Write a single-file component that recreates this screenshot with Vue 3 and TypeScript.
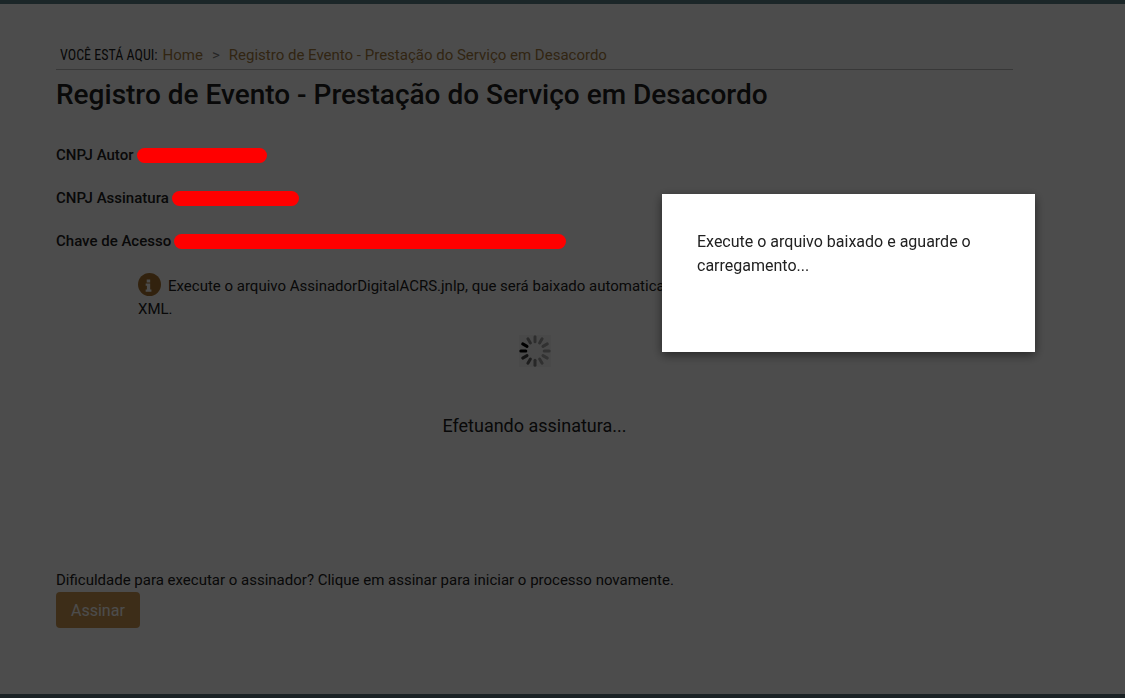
<script setup lang="ts">
interface Field {
  label: string
  mark: string
}

const title = 'Registro de Evento - Prestação do Serviço em Desacordo'

const fields: Field[] = [
  { label: 'CNPJ Autor', mark: 'autor' },
  { label: 'CNPJ Assinatura', mark: 'assinatura' },
  { label: 'Chave de Acesso', mark: 'chave' },
]

// Spokes run clockwise from the top; the darkest one leads the rotation.
const spokes: string[] = [
  '#9c9c9c', '#a0a0a0', '#a4a4a4', '#a8a8a8', '#aaaaaa', '#a0a0a0',
  '#858585', '#666666', '#404040', '#000000', '#000000', '#8c8c8c',
]
</script>

<template>
  <div class="page">
    <main class="content">
      <nav class="breadcrumb" aria-label="Você está aqui">
        <span class="here">VOCÊ ESTÁ AQUI:</span>
        <a href="#">Home</a>
        <span class="sep">&gt;</span>
        <a href="#">{{ title }}</a>
      </nav>
      <h1>{{ title }}</h1>

      <dl class="fields">
        <div v-for="field in fields" :key="field.mark" class="field">
          <dt>{{ field.label }}</dt>
          <dd class="mark" :class="field.mark"></dd>
        </div>
      </dl>

      <section class="progress">
        <p class="info">
          <svg class="info-icon" viewBox="0 0 24 24" aria-hidden="true">
            <circle cx="12" cy="12" r="12" fill="#a87430" />
            <path d="M9.1 6.8h3.6v3H9.1zM8 11h4.7v6.2h1.3v2.3H8v-2.3h1.3v-3.9H8z" fill="#fff" />
          </svg>Execute o arquivo AssinadorDigitalACRS.jnlp, que será baixado automaticamente, para realizar a assinatura do XML.
        </p>
        <svg class="spinner" viewBox="0 0 32 32" aria-hidden="true">
          <rect width="32" height="32" fill="#f5f5f5" />
          <line
            v-for="(color, i) in spokes"
            :key="i"
            x1="16" y1="1.8" x2="16" y2="6.8"
            :stroke="color"
            stroke-width="3"
            stroke-linecap="round"
            :transform="`rotate(${i * 30} 16 16)`"
          />
        </svg>
        <p class="status">Efetuando assinatura...</p>
      </section>

      <p class="help">Dificuldade para executar o assinador? Clique em assinar para iniciar o processo novamente.</p>
      <button type="button" class="sign">Assinar</button>
    </main>

    <div class="overlay">
      <div class="dialog" role="dialog" aria-modal="true" aria-labelledby="dialog-text">
        <p id="dialog-text">Execute o arquivo baixado e aguarde o carregamento...</p>
      </div>
    </div>
  </div>
</template>

<style>
body {
  margin: 0;
}
</style>

<style scoped>
.page {
  box-sizing: border-box;
  min-height: 100vh;
  padding: 40px 112px 64px 56px;
  border-top: 4px solid #5d7f85;
  border-bottom: 4px solid #59707a;
  background: #fff;
  color: #212121;
  font-family: Roboto, "Liberation Sans", sans-serif;
  font-size: 15px;
  line-height: 23px;
}
.breadcrumb {
  display: flex;
  align-items: center;
  height: 23px;
  padding: 0 0 2px 4px;
  border-bottom: 1px solid #bdbdbd;
}
.breadcrumb a {
  color: #a67c3f;
  text-decoration: none;
}
.here {
  margin-right: 5px;
  font-family: "Roboto Condensed", Roboto, sans-serif;
  font-size: 14px;
}
.sep {
  margin: 0 9px;
  color: #808080;
}
h1 {
  margin: 8px 0 0;
  font-size: 28px;
  font-weight: 500;
  line-height: 34px;
}
.fields {
  margin: 32px 0 0;
}
.field {
  display: flex;
  align-items: center;
  height: 23px;
  margin-bottom: 20px;
}
dt {
  font-weight: 500;
}
.mark {
  position: relative;
  z-index: 2;
  height: 15px;
  margin: 0 0 0 3px;
  border-radius: 8px;
  background: #f00;
}
.autor {
  width: 130px;
}
.assinatura {
  width: 127px;
}
.chave {
  width: 392px;
}
.progress {
  padding: 0 82px;
}
.info {
  margin: 0;
}
.info-icon {
  width: 23px;
  height: 23px;
  margin-right: 7px;
  vertical-align: -5px;
}
.spinner {
  display: block;
  width: 32px;
  height: 32px;
  margin: 14px auto 0;
}
.status {
  margin: 47px 0 0;
  font-size: 18px;
  text-align: center;
}
.help {
  margin: 132px 0 0;
}
.sign {
  display: block;
  height: 36px;
  padding: 0 15px;
  border: 0;
  border-radius: 4px;
  background: #cd9853;
  color: #fff;
  font: 16px Roboto, "Liberation Sans", sans-serif;
}
.overlay {
  position: fixed;
  inset: 0;
  z-index: 1;
  background: rgba(0, 0, 0, 0.7);
}
.dialog {
  position: absolute;
  top: 194px;
  right: 90px;
  box-sizing: border-box;
  width: 373px;
  min-height: 158px;
  padding: 36px 35px;
  background: #fff;
  box-shadow: 0 3px 10px rgba(0, 0, 0, 0.5);
  font-size: 16px;
  line-height: 24px;
}
.dialog p {
  margin: 0;
}
</style>
